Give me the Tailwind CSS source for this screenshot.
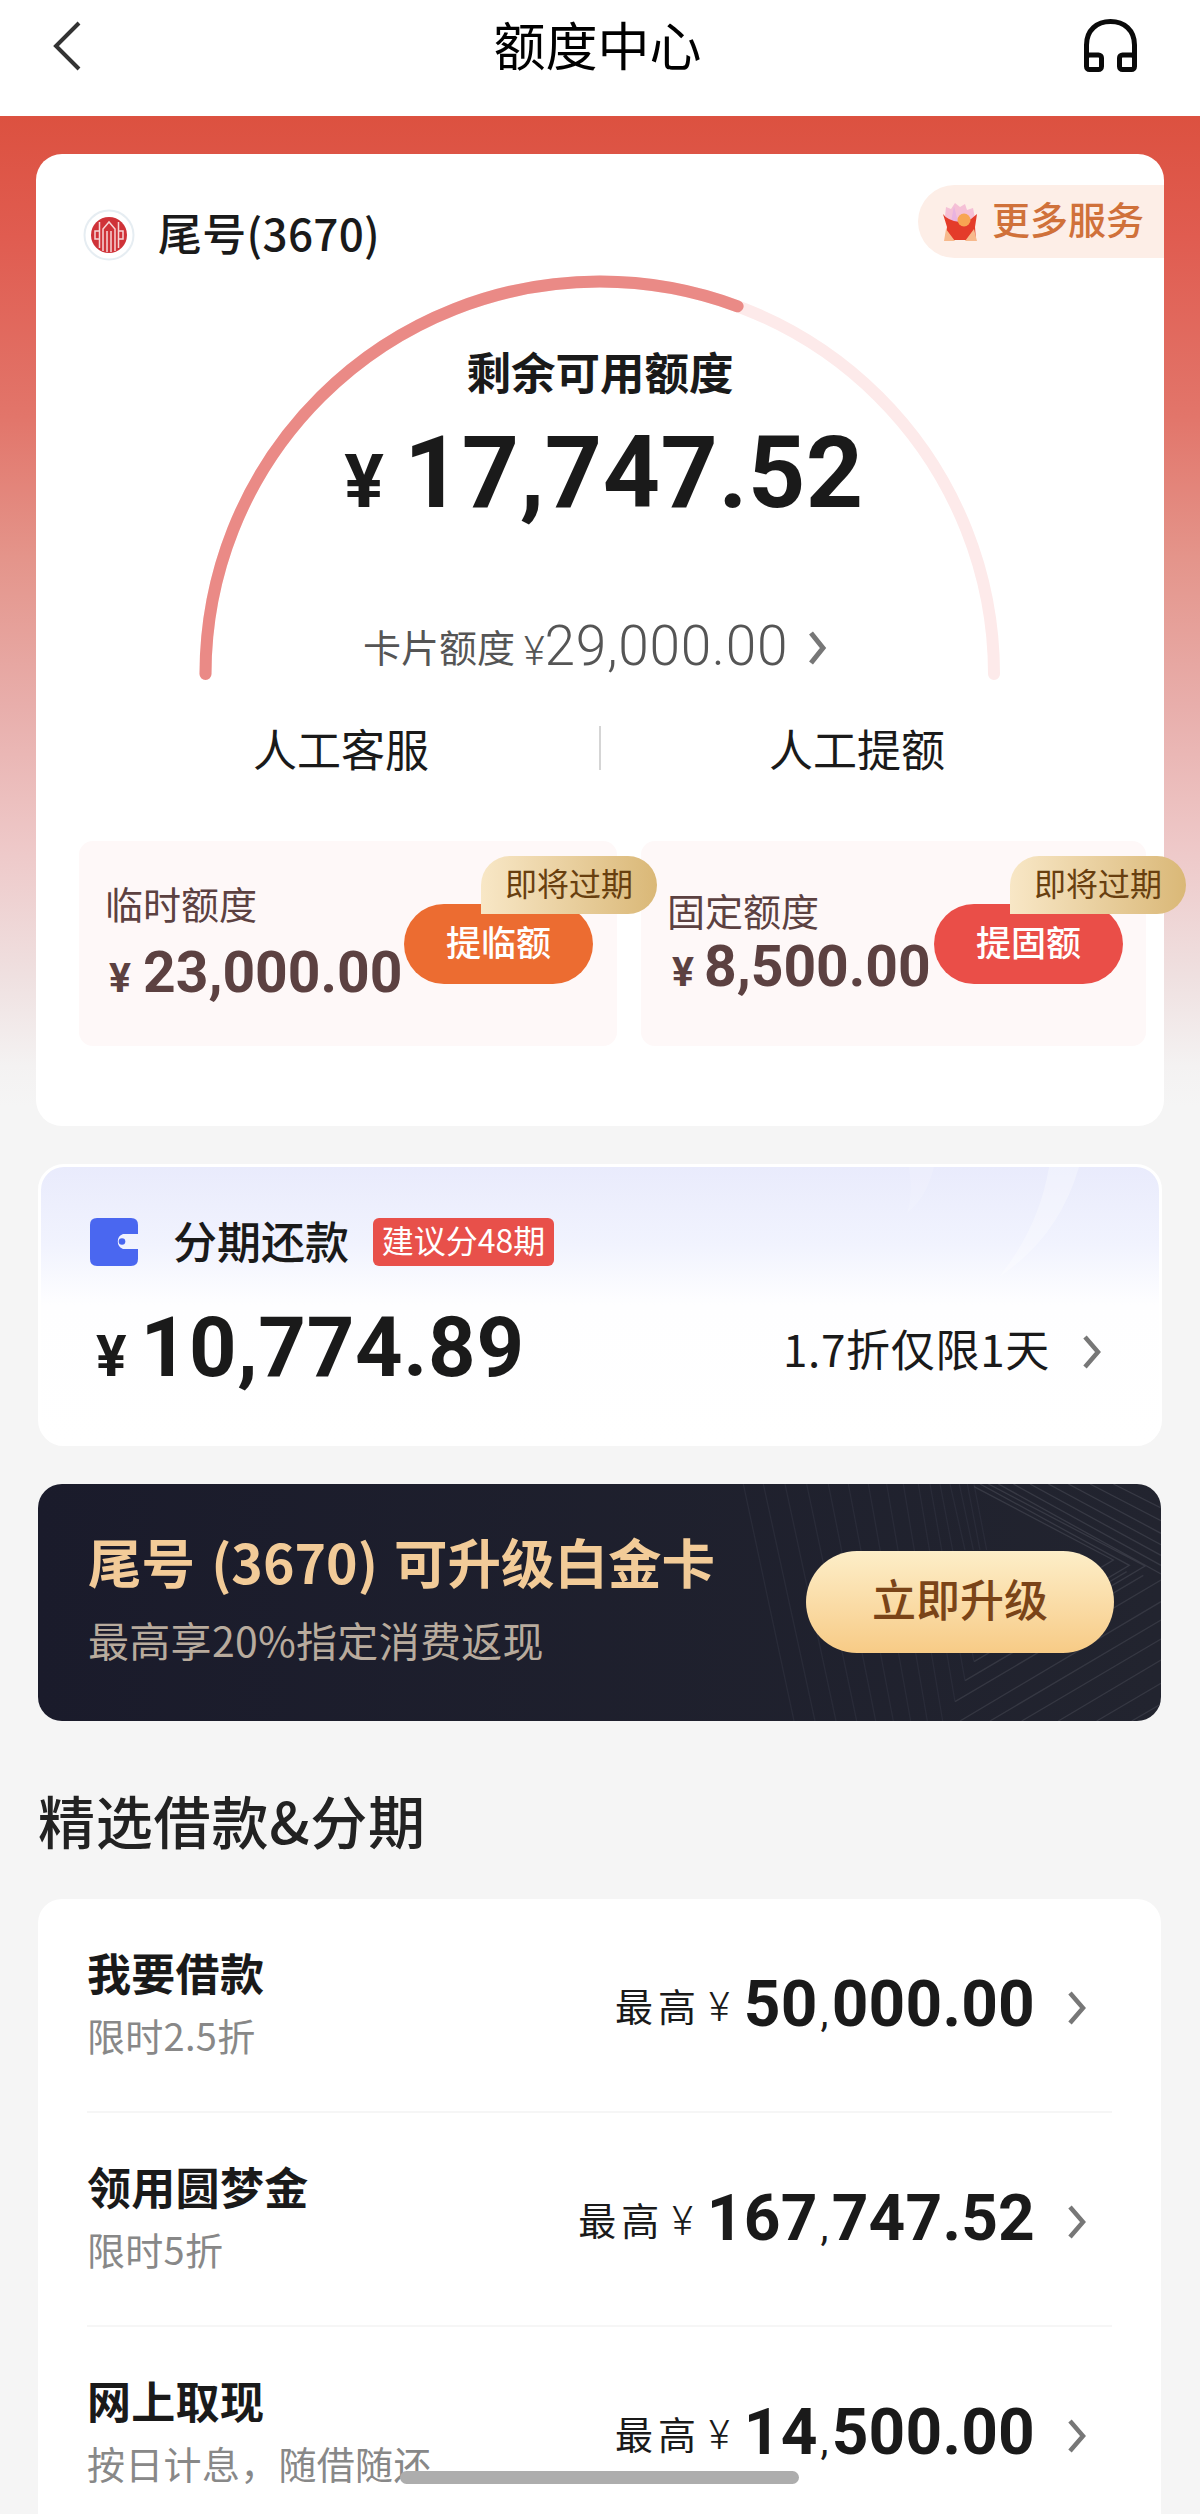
<!DOCTYPE html>
<html lang="zh-CN">
<head>
<meta charset="utf-8">
<title>额度中心</title>
<script src="https://cdn.jsdelivr.net/npm/@tailwindcss/browser@4"></script>
</head>
<body class="w-[1200px] h-[2514px] overflow-hidden bg-[#f5f5f5] text-[#1a1a1a] font-['Noto_Sans_CJK_SC',sans-serif]">
<div class="relative w-[1200px] h-[2514px] overflow-hidden flex flex-col">

  <!-- Title bar -->
  <header class="h-[116px] bg-white flex justify-between items-start shrink-0 pl-[50px] pr-[60px] pt-[16px]">
    <svg class="w-[34px] h-[60px]" viewBox="0 0 34 60" fill="none" stroke="#333" stroke-width="4"><path d="M29 7L6 30L29 53"/></svg>
    <h1 class="text-[52px] leading-[56px] text-black pl-[31px]">额度中心</h1>
    <svg class="w-[60px] h-[60px]" viewBox="0 0 60 60" fill="none" stroke="#0a0a0a" stroke-width="5"><path d="M6.500 42V29C6.500 14 17 5.500 30.500 5.500S54.500 14 54.500 29V42"/><rect x="6.500" y="39" width="15" height="14.500" rx="3"/><rect x="39.500" y="39" width="15" height="14.500" rx="3"/></svg>
  </header>

  <div class="h-[1048px] shrink-0 px-[36px] pt-[38px] bg-[linear-gradient(180deg,#dc5140_0px,#e05c50_120px,#e2756a_300px,#e4948a_440px,#e8aeab_590px,#eec8c8_730px,#efe0e0_860px,#f4f2f2_950px,#f5f5f5_990px)]">
    <section class="relative w-[1128px] h-[972px] bg-white rounded-[26px] flex flex-col">
      <!-- Limit gauge -->
      <svg class="absolute left-0 top-0 w-[1128px] h-[560px]" viewBox="36 154 1128 560" fill="none" stroke-width="12" stroke-linecap="round">
        <path d="M205.500 674A394.250 392.500 0 0 1 994 674" stroke="#fdeaea"/>
        <path d="M205.500 674A394.250 392.500 0 0 1 994 674" stroke="#ea8a86" pathLength="100" stroke-dasharray="61.400 200"/>
      </svg>
      <div class="relative h-[150px] flex justify-between items-start">
        <div class="flex items-center pl-[47px] pt-[48px]">
          <svg class="w-[52px] h-[52px] mt-[6px]" viewBox="0 0 52 52"><circle cx="26" cy="26" r="24.500" fill="#fff" stroke="#e6edf2" stroke-width="2"/><circle cx="26" cy="26" r="18" fill="#cf3238"/><g stroke="#f7d5d5" stroke-width="1.500" fill="none"><path d="M20 42V20L26 13L32 20V42M24 43V22M28 43V22M16.500 13V39M35.500 13V39M16 22H12V30H16M36 22H40V30H36"/></g></svg>
          <span class="pl-[23px] text-[44px] leading-[60px] font-medium tracking-[0.300px]">尾号(3670)</span>
        </div>
        <div class="mt-[31px] w-[246px] h-[73px] bg-[#fdeee7] rounded-l-full flex items-center pl-[24px] gap-[14px]">
          <svg class="w-[36px] h-[40px]" viewBox="0 0 36 40"><path d="M3 14L4 5L9 7L13 1L18 5L23 2L25 8L31 6L33 16L28 22H8Z" fill="#f5c0d6"/><path d="M12 4L16 20H9Z" fill="#e9b3e0"/><path d="M1 12Q3 15 7 17Q18 23 29 17L35 12L33 25L34 38H3L5 25Z" fill="#e43c2a"/><circle cx="22" cy="18" r="6.500" fill="#f8a552"/><path d="M2 39L4 27L13 39ZM35 39L32 27L23 39Z" fill="#f7b98c"/></svg>
          <span class="text-[38px] leading-[50px] text-[#d0713a] font-medium -mt-[7px]">更多服务</span>
        </div>
      </div>
      <div class="relative flex flex-col items-center">
        <h2 class="mt-[37px] text-[44.500px] leading-[60px] font-bold">剩余可用额度</h2>
        <div class="mt-[17px] h-[110px] flex items-baseline pl-[8px] font-['Roboto',sans-serif] font-bold leading-[110px]">
          <span class="text-[74px]">¥</span><span class="text-[100px] pl-[20px] tracking-[0.500px]">17,747.52</span>
        </div>
        <div class="mt-[86px] h-[64px] flex items-baseline text-[#555] leading-[64px] pr-[9px]">
          <span class="text-[38px] -translate-y-[3px]">卡片额度</span><span class="font-['Roboto'] font-light text-[40px] pl-[9px]">¥</span><span class="font-['Roboto'] font-light text-[55px] tracking-[0.700px]">29,000.00</span>
          <svg class="w-[20px] h-[34px] ml-[20px] self-center mt-[4px]" viewBox="0 0 20 34" fill="none" stroke="#777" stroke-width="5"><path d="M3 2L15 17L3 32"/></svg>
        </div>
      </div>
      <div class="relative mt-[40px] h-[60px] flex items-center text-[44px] leading-[60px]">
        <span class="w-[563px] pl-[217px]">人工客服</span><i class="w-[2px] h-[44px] bg-[#d5d5d5]"></i><span class="pl-[168px]">人工提额</span>
      </div>
      <div class="relative mt-[63px] pl-[43px] flex gap-[24px] text-[#5c4141]">
        <div class="relative z-10 w-[538px] h-[205px] rounded-[14px] bg-[#fef8f8] flex items-start">
          <div class="pl-[26px] pt-[37px] w-[325px] shrink-0 whitespace-nowrap">
            <div class="text-[38px] leading-[50px]">临时额度</div>
            <div class="h-[70px] flex items-baseline leading-[70px] font-['Roboto'] font-bold mt-[10px] pl-[4px]"><span class="text-[41px]">¥</span><span class="text-[57px] pl-[12px]">23,000.00</span></div>
          </div>
          <div class="mt-[63px] w-[189px] h-[80px] rounded-full bg-[#ec6c31] text-white text-[35px] leading-[74px] text-center font-medium">提临额</div>
          <div class="absolute left-[402px] top-[15px] w-[176px] h-[58px] rounded-[29px] rounded-bl-none bg-linear-to-r from-[#f8e7c6] to-[#dab877] text-[#683f0f] text-[32px] leading-[52px] text-center">即将过期</div>
        </div>
        <div class="relative w-[505px] h-[205px] rounded-[14px] bg-[#fef8f8] flex items-start">
          <div class="pl-[26px] pt-[44px] w-[293px] shrink-0 whitespace-nowrap">
            <div class="text-[38px] leading-[50px]">固定额度</div>
            <div class="h-[70px] flex items-baseline leading-[70px] font-['Roboto'] font-bold -mt-[3px] pl-[5px]"><span class="text-[41px]">¥</span><span class="text-[57px] pl-[10px]">8,500.00</span></div>
          </div>
          <div class="mt-[63px] w-[189px] h-[80px] shrink-0 rounded-full bg-[#ea4e48] text-white text-[35px] leading-[74px] text-center font-medium">提固额</div>
          <div class="absolute left-[369px] top-[15px] w-[176px] h-[58px] rounded-[29px] rounded-bl-none bg-linear-to-r from-[#f8e7c6] to-[#dab877] text-[#683f0f] text-[32px] leading-[52px] text-center">即将过期</div>
        </div>
      </div>
    </section>
  </div>

  <!-- Instalment -->
  <section class="mx-[38px] h-[282px] shrink-0 rounded-[26px] border-[3px] border-white bg-[linear-gradient(180deg,#e9ebfc_0%,#f1f3fe_28%,#fefeff_50%,#fff_100%)] overflow-hidden relative">
    <svg class="absolute right-0 top-0 w-[270px] h-[110px]" viewBox="0 0 270 110"><path d="M190 0H160Q150 60 110 110Q170 70 190 0Z" fill="#fff" opacity=".3"/><path d="M45 0H20Q24 30 18 46Q38 30 45 0Z" fill="#fff" opacity=".15"/></svg>
    <div class="relative flex items-center pl-[48px] pt-[45px] h-[105px]">
      <svg class="w-[50px] h-[50px]" viewBox="0 0 50 50"><path d="M8 1H42Q49 1 49 8V17H34A8 8 0 0 0 34 32H49V42Q49 49 42 49H8Q1 49 1 42V8Q1 1 8 1Z" fill="#4a67f0"/><circle cx="33" cy="24.500" r="3.300" fill="#4a67f0"/></svg>
      <span class="text-[44px] leading-[60px] pl-[34px] -mt-[5px] font-medium">分期还款</span>
      <span class="ml-[24px] w-[181px] h-[48px] rounded-[6px] bg-[#e8504a] text-white text-[32px] leading-[43px] text-center">建议分48期</span>
    </div>
    <div class="relative flex items-baseline pl-[55px] pr-[57px] mt-[26px] h-[100px] leading-[100px]">
      <span class="font-['Roboto'] font-bold text-[57px]">¥</span><span class="font-['Roboto'] font-bold text-[83px] pl-[14px] tracking-[0.700px]">10,774.89</span>
      <span class="ml-auto text-[44px] tracking-[0.700px] -translate-y-[9px]">1.7折仅限1天</span>
      <svg class="w-[20px] h-[34px] ml-[32px] self-center mt-[8px]" viewBox="0 0 20 34" fill="none" stroke="#777" stroke-width="4.500"><path d="M3 2L16 17L3 32"/></svg>
    </div>
  </section>

  <!-- Upgrade banner -->
  <section class="mx-[38px] mt-[38px] h-[237px] w-[1123px] shrink-0 rounded-[24px] bg-linear-to-r from-[#1a1b2b] to-[#22242f] overflow-hidden relative flex justify-between">
    <svg class="absolute right-0 top-0 w-[460px] h-[237px]" viewBox="-57 42 1380 711" fill="none" stroke-width="4">
      <path stroke="#292b38" d="M70 42L222 753M130 42L285 753M195 42L348 753M260 42L410 753M325 42L467 753M385 42L520 753M445 42L572 753M500 42L622 753M550 42L668 753M595 42L705 695M630 42L735 632M660 42L762 575M690 42L735 240M718 42L760 240M742 42L780 240M762 42L800 240"/>
      <path stroke="#353742" d="M705 695L1323 330M735 632L1270 316M762 575L1220 305M720 753L1323 395M810 753L1323 450M905 753L1323 507M1015 753L1323 570M1130 753L1323 640M1235 753L1323 702"/>
      <path stroke="#373944" d="M762 50L1180 270L1100 318M780 42L1228 286L1100 362M805 42L1275 288L1130 374M835 42L1323 312M880 42L1323 286M930 42L1323 256M985 42L1323 224M1045 42L1323 190M1110 42L1323 152M1180 42L1323 114"/>
    </svg>
    <div class="relative pl-[50px] pt-[45px]">
      <div class="text-[53.500px] leading-[64px] font-bold text-[#f2cb98] [word-spacing:4px]">尾号 (3670) 可升级白金卡</div>
      <div class="text-[41px] leading-[56px] text-[#b8ab9d] mt-[18px] tracking-[0.300px]">最高享20%指定消费返现</div>
    </div>
    <div class="relative mt-[67px] mr-[47px] w-[308px] h-[102px] rounded-full bg-linear-to-b from-[#fdeec8] to-[#f7cb86] text-[#7a4418] text-[44px] leading-[94px] font-medium text-center">立即升级</div>
  </section>

  <h2 class="pl-[38px] mt-[61px] h-[80px] text-[57px] leading-[74px] tracking-[0.800px] font-medium text-[#222] shrink-0">精选借款&amp;分期</h2>

  <!-- Loan list -->
  <section class="mx-[38px] mt-[37px] w-[1123px] grow rounded-t-[24px] bg-white px-[49px]">
    <div class="h-[214px] border-b-2 border-[#f6f6f6] flex justify-between pt-[44px] pr-[25px]">
      <div><div class="text-[44px] leading-[58px] font-bold tracking-[0.300px]">我要借款</div><div class="text-[38px] leading-[50px] text-[#888] mt-[9px] tracking-[0.300px]">限时2.5折</div></div>
      <div class="h-[70px] mt-[27px] flex items-baseline leading-[70px]"><span class="text-[38px] tracking-[5px] -translate-y-[5px]">最高</span><span class="font-['Roboto'] font-light text-[40px] pl-[8px] -translate-y-[5px]">¥</span><span class="font-['Roboto'] font-bold text-[64px] pl-[14px] tracking-[0.200px]">50<span class="text-[40px] font-normal px-[3px]">,</span>000.00</span><svg class="w-[20px] h-[34px] ml-[32px] self-center mt-[5px]" viewBox="0 0 20 34" fill="none" stroke="#777" stroke-width="4.500"><path d="M3 2L16 17L3 32"/></svg></div>
    </div>
    <div class="h-[214px] border-b-2 border-[#f6f6f6] flex justify-between pt-[44px] pr-[25px]">
      <div><div class="text-[44px] leading-[58px] font-bold tracking-[0.300px]">领用圆梦金</div><div class="text-[38px] leading-[50px] text-[#888] mt-[9px] tracking-[0.300px]">限时5折</div></div>
      <div class="h-[70px] mt-[27px] flex items-baseline leading-[70px]"><span class="text-[38px] tracking-[5px] -translate-y-[5px]">最高</span><span class="font-['Roboto'] font-light text-[40px] pl-[8px] -translate-y-[5px]">¥</span><span class="font-['Roboto'] font-bold text-[64px] pl-[14px] tracking-[0.200px]">167<span class="text-[40px] font-normal px-[3px]">,</span>747.52</span><svg class="w-[20px] h-[34px] ml-[32px] self-center mt-[5px]" viewBox="0 0 20 34" fill="none" stroke="#777" stroke-width="4.500"><path d="M3 2L16 17L3 32"/></svg></div>
    </div>
    <div class="h-[214px] flex justify-between pt-[44px] pr-[25px]">
      <div><div class="text-[44px] leading-[58px] font-bold tracking-[0.300px]">网上取现</div><div class="text-[38px] leading-[50px] text-[#888] mt-[9px] tracking-[0.300px]">按日计息，随借随还</div></div>
      <div class="h-[70px] mt-[27px] flex items-baseline leading-[70px]"><span class="text-[38px] tracking-[5px] -translate-y-[5px]">最高</span><span class="font-['Roboto'] font-light text-[40px] pl-[8px] -translate-y-[5px]">¥</span><span class="font-['Roboto'] font-bold text-[64px] pl-[14px] tracking-[0.200px]">14<span class="text-[40px] font-normal px-[3px]">,</span>500.00</span><svg class="w-[20px] h-[34px] ml-[32px] self-center mt-[5px]" viewBox="0 0 20 34" fill="none" stroke="#777" stroke-width="4.500"><path d="M3 2L16 17L3 32"/></svg></div>
    </div>
  </section>
  <!-- Home indicator -->
  <div class="absolute left-[400px] top-[2471px] w-[399px] h-[13px] rounded-full bg-[#adadad]"></div>
</div>
</body>
</html>
